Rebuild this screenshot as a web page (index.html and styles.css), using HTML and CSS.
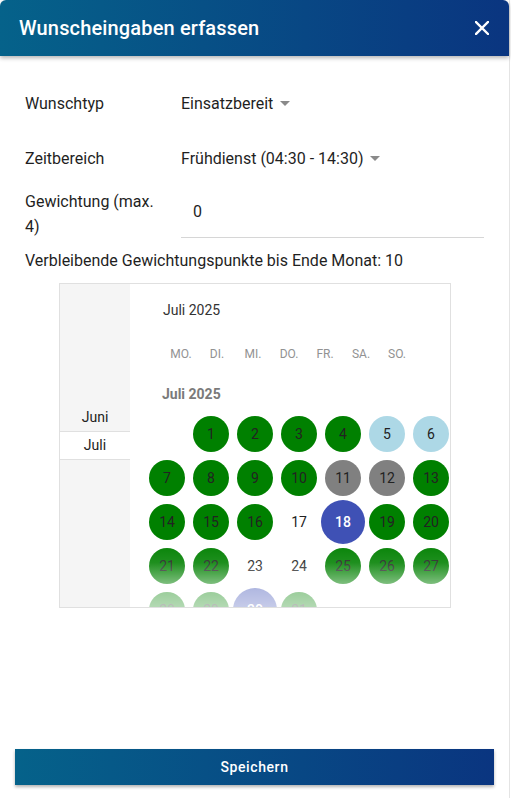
FILE: index.html
```html
<!DOCTYPE html>
<html lang="de">
  <head>
    <meta charset="UTF-8">
    <meta name="viewport" content="width=device-width, initial-scale=1.0">
    <title>Wunscheingaben erfassen</title>
    <link rel="stylesheet" href="styles.css">
  </head>
  <body>
    <div class="dialog">
      <div class="dialog-header">
        <h1>Wunscheingaben erfassen</h1>
        <button class="close-btn" type="button" aria-label="Schließen">
          <svg width="14" height="14" viewBox="0 0 14 14">
            <path d="M1 1 L13 13 M13 1 L1 13" stroke="#fff" stroke-width="2.4" stroke-linecap="square"/>
          </svg>
        </button>
      </div>

      <div class="dialog-body">
        <div class="form-row row-typ">
          <label class="form-label">Wunschtyp</label>
          <div class="select">Einsatzbereit <span class="caret"></span></div>
        </div>

        <div class="form-row row-zeit">
          <label class="form-label">Zeitbereich</label>
          <div class="select">Frühdienst (04:30 - 14:30) <span class="caret"></span></div>
        </div>

        <div class="form-row row-gewicht">
          <label class="form-label">Gewichtung (max. 4)</label>
          <div class="text-input">0</div>
        </div>

        <p class="hint">Verbleibende Gewichtungspunkte bis Ende Monat: 10</p>

        <div class="calendar">
          <div class="month-list">
            <div class="month">Juni</div>
            <div class="month active">Juli</div>
          </div>

          <div class="month-view">
            <div class="cal-title">Juli 2025</div>
            <div class="weekdays">
              <span>MO.</span><span>DI.</span><span>MI.</span><span>DO.</span><span>FR.</span><span>SA.</span><span>SO.</span>
            </div>
            <div class="month-label">Juli 2025</div>
            <div class="days">
              <span class="day"></span>
              <span class="day"><b class="green">1</b></span>
              <span class="day"><b class="green">2</b></span>
              <span class="day"><b class="green">3</b></span>
              <span class="day"><b class="green">4</b></span>
              <span class="day"><b class="blue">5</b></span>
              <span class="day"><b class="blue">6</b></span>

              <span class="day"><b class="green">7</b></span>
              <span class="day"><b class="green">8</b></span>
              <span class="day"><b class="green">9</b></span>
              <span class="day"><b class="green">10</b></span>
              <span class="day"><b class="grey">11</b></span>
              <span class="day"><b class="grey">12</b></span>
              <span class="day"><b class="green">13</b></span>

              <span class="day"><b class="green">14</b></span>
              <span class="day"><b class="green">15</b></span>
              <span class="day"><b class="green">16</b></span>
              <span class="day"><b>17</b></span>
              <span class="day"><b class="today">18</b></span>
              <span class="day"><b class="green">19</b></span>
              <span class="day"><b class="green">20</b></span>

              <span class="day"><b class="green">21</b></span>
              <span class="day"><b class="green">22</b></span>
              <span class="day"><b>23</b></span>
              <span class="day"><b>24</b></span>
              <span class="day"><b class="green">25</b></span>
              <span class="day"><b class="green">26</b></span>
              <span class="day"><b class="green">27</b></span>

              <span class="day"><b class="green">28</b></span>
              <span class="day"><b class="green">29</b></span>
              <span class="day"><b class="today">30</b></span>
              <span class="day"><b class="green">31</b></span>
            </div>
            <div class="fade"></div>
          </div>
        </div>
      </div>

      <div class="dialog-footer">
        <button class="save-btn" type="button">Speichern</button>
      </div>
    </div>
  </body>
</html>
```

FILE: styles.css
```css
body {
  margin: 0;
  padding: 0;
  font-family: Roboto, "Liberation Sans", Arial, sans-serif;
  color: #1f1f1f;
  background: #fff;
}
.dialog {
  width: 509px;
  height: 798px;
  display: flex;
  flex-direction: column;
  border-right: 1px solid #e4e4e4;
  background: #fff;
}
.dialog-header {
  height: 56px;
  flex: none;
  display: flex;
  align-items: center;
  justify-content: space-between;
  padding: 0 20px 0 19px;
  background: linear-gradient(90deg, #05628a, #0a3580);
  border-radius: 6px 6px 0 0;
  box-shadow: 0 2px 4px rgba(0, 0, 0, 0.3);
  position: relative;
  z-index: 1;
}
.dialog-header h1 {
  margin: 0;
  font-size: 20px;
  font-weight: 500;
  letter-spacing: 0.15px;
  color: #fff;
}
.close-btn {
  border: none;
  background: none;
  padding: 0;
  width: 14px;
  height: 14px;
  display: flex;
  cursor: pointer;
}
.dialog-body {
  flex: 1;
  padding: 0 25px;
}
.form-row {
  display: flex;
  align-items: center;
  font-size: 16px;
}
.form-label {
  width: 140px;
  padding-right: 16px;
  flex: none;
  line-height: 25px;
}
.row-typ {
  margin-top: 35px;
  height: 24px;
}
.row-zeit {
  margin-top: 31px;
  height: 24px;
}
.row-gewicht {
  margin-top: 19px;
  height: 50px;
}
.select {
  display: flex;
  align-items: center;
  gap: 7px;
}
.caret {
  width: 0;
  height: 0;
  border-left: 5px solid transparent;
  border-right: 5px solid transparent;
  border-top: 5px solid #8a8a8a;
  margin-top: 1px;
}
.text-input {
  flex: 1;
  align-self: stretch;
  box-sizing: border-box;
  padding: 13px 0 0 12px;
  border-bottom: 1px solid #d6d6d6;
  margin-bottom: 1px;
}
.hint {
  margin: 10px 0 0;
  font-size: 16px;
  line-height: 24px;
}
.calendar {
  margin: 10px 0 0 34px;
  width: 390px;
  height: 323px;
  border: 1px solid #e0e0e0;
  display: flex;
  overflow: hidden;
}
.month-list {
  width: 70px;
  flex: none;
  background: #f5f5f5;
  padding-top: 119px;
  box-sizing: border-box;
  font-size: 14px;
  text-align: center;
}
.month {
  height: 28px;
  line-height: 28px;
  color: #222;
}
.month.active {
  height: 27px;
  line-height: 27px;
  background: #fff;
  border-top: 1px solid #e0e0e0;
  border-bottom: 1px solid #e0e0e0;
}
.month-view {
  flex: 1;
  position: relative;
  overflow: hidden;
  padding-left: 15px;
}
.cal-title {
  margin: 17px 0 0 18px;
  font-size: 14px;
  line-height: 18px;
  color: #333;
}
.weekdays {
  display: grid;
  grid-template-columns: repeat(7, 36px);
  margin: 27px 0 0 18px;
  font-size: 12px;
  line-height: 16px;
  color: #929292;
  text-align: center;
}
.month-label {
  margin: 24px 0 0 17px;
  font-size: 14px;
  font-weight: 700;
  line-height: 16px;
  color: #7a7a7a;
}
.days {
  display: grid;
  grid-template-columns: repeat(7, 44px);
  grid-auto-rows: 44px;
  margin-top: 10px;
  width: 308px;
}
.day {
  display: flex;
  align-items: center;
  justify-content: center;
}
.day b {
  width: 36px;
  height: 36px;
  border-radius: 50%;
  display: flex;
  align-items: center;
  justify-content: center;
  font-size: 14px;
  font-weight: 400;
  color: #222;
}
.day b.green {
  background: #008000;
}
.day b.blue {
  background: #add8e6;
}
.day b.grey {
  background: #808080;
}
.day b.today {
  width: 44px;
  height: 44px;
  background: #3f51b5;
  color: #fff;
  font-weight: 500;
}
.fade {
  position: absolute;
  left: 0;
  right: 0;
  bottom: 0;
  height: 68px;
  background: linear-gradient(rgba(255, 255, 255, 0), rgba(255, 255, 255, 0.12) 35%, rgba(255, 255, 255, 0.6) 75%, rgba(255, 255, 255, 0.7));
}
.dialog-footer {
  flex: none;
  padding: 0 15px 13px;
}
.save-btn {
  width: 100%;
  height: 36px;
  border: none;
  background: linear-gradient(90deg, #05628a, #0a3580);
  color: #fff;
  font-family: Roboto, "Liberation Sans", Arial, sans-serif;
  font-size: 14px;
  font-weight: 500;
  letter-spacing: 0.6px;
  box-shadow: 0 2px 3px rgba(0, 0, 0, 0.3);
  cursor: pointer;
}
```
